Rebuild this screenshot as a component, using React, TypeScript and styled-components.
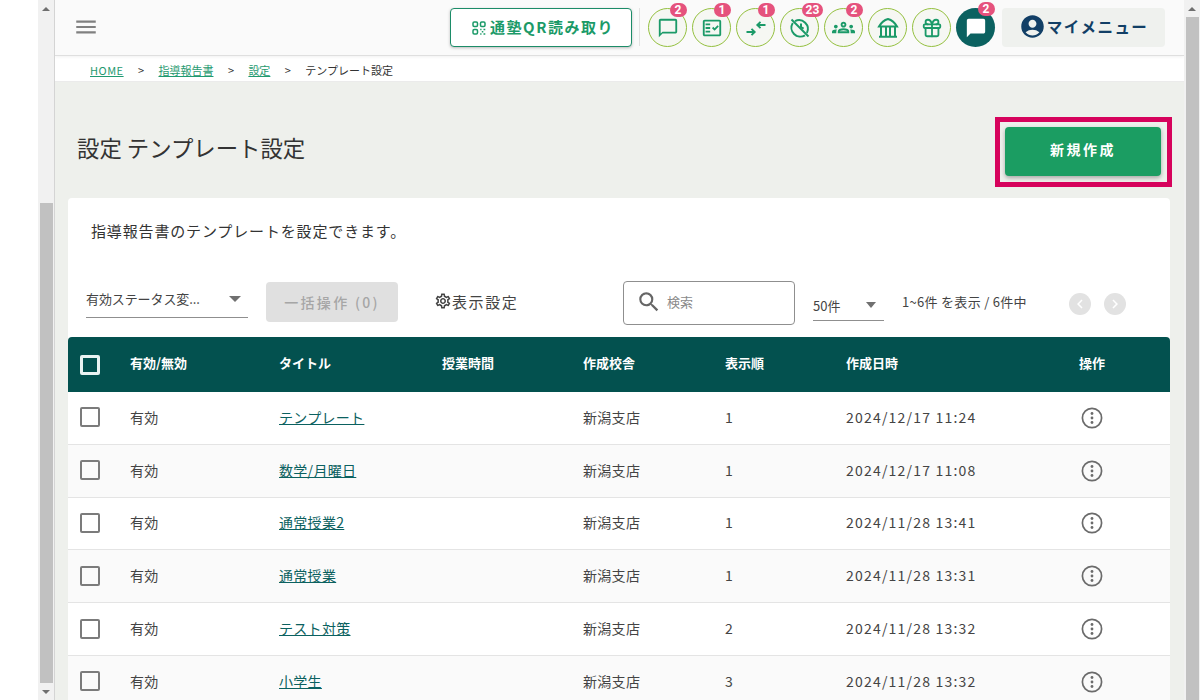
import React from "react";
import styled, { createGlobalStyle } from "styled-components";
import {
  MdAccountCircle,
  MdChatBubble,
  MdChevronLeft,
  MdChevronRight,
  MdMenu,
  MdOutlineChatBubbleOutline,
  MdOutlineFactCheck,
  MdOutlineGroups,
  MdOutlineSettings,
  MdSearch,
} from "react-icons/md";
import { Gift } from "lucide-react";

const FONT = `"Noto Sans CJK JP", "Noto Sans", sans-serif`;

const Global = createGlobalStyle`
  html, body { margin: 0; padding: 0; height: 100%; overflow: hidden; background: #fff; }
  #root { height: 700px; }
  * { box-sizing: border-box; }
  body { font-family: ${FONT}; color: #333; }
`;

const Page = styled.div`
  display: flex;
  width: 1200px;
  height: 700px;
  overflow: hidden;
  padding-left: 38px;
`;

const Track = styled.div`
  flex: 0 0 16px;
  height: 700px;
  background: #f1f1f1;
  display: flex;
  flex-direction: column;
  align-items: center;
`;
const LeftTrack = styled(Track)`
  border-right: 1px solid #d4d4d4;
  flex-basis: 17px;
`;
const Spacer = styled.div<{ $h: number }>`
  flex: 0 0 ${(p) => p.$h}px;
`;
const Thumb = styled.div`
  flex: 1;
  width: 13px;
  background: #c1c1c1;
`;
const Arrow = styled.div<{ $down?: boolean }>`
  flex: 0 0 17px;
  display: flex;
  align-items: center;
  justify-content: center;
  &::before {
    content: "";
    border-left: 4px solid transparent;
    border-right: 4px solid transparent;
    ${(p) =>
      p.$down ? "border-top: 4px solid #6f6f6f;" : "border-bottom: 4px solid #6f6f6f;"}
  }
`;

const Main = styled.div`
  flex: 1;
  min-width: 0;
  display: flex;
  flex-direction: column;
  height: 700px;
  overflow: hidden;
  background: #eef0ec;
`;

const Header = styled.header`
  flex: 0 0 56px;
  display: flex;
  align-items: flex-start;
  background: #fafafa;
  border-bottom: 1px solid #dfdfdf;
  box-shadow: 0 1px 3px rgba(0, 0, 0, 0.06);
  padding: 8px 19px 0 18px;
  position: relative;
  z-index: 1;
`;
const Burger = styled.div`
  color: #808080;
  display: flex;
  margin: 6px auto 0 0;
`;
const QrButton = styled.button`
  width: 182px;
  height: 39px;
  margin-right: 7px;
  background: #fff;
  border: 1px solid #1c8c68;
  border-radius: 4px;
  box-shadow: 0 1px 3px rgba(0, 0, 0, 0.25);
  color: #1b9a68;
  font-family: ${FONT};
  font-weight: 700;
  font-size: 15px;
  letter-spacing: 1.5px;
  display: flex;
  align-items: center;
  justify-content: center;
  gap: 4px;
  padding: 0 0 3px 4px;
`;
const QrIcon = styled.svg`
  margin-top: 3px;
`;
const Divider = styled.div`
  width: 1px;
  height: 38px;
  background: #e2e2e2;
  margin-right: 8px;
`;
const IconRow = styled.div`
  display: flex;
  gap: 5px;
`;
const Round = styled.div<{ $dark?: boolean }>`
  width: 39px;
  height: 39px;
  border-radius: 50%;
  position: relative;
  display: flex;
  align-items: center;
  justify-content: center;
  color: ${(p) => (p.$dark ? "#fff" : "#1b9a68")};
  background: ${(p) => (p.$dark ? "#0b6160" : "#f6f7f3")};
  border: ${(p) => (p.$dark ? "none" : "1px solid #94c03f")};
`;
const Badge = styled.span`
  position: absolute;
  top: -6px;
  left: 50%;
  margin-left: 2px;
  min-width: 17px;
  height: 14px;
  padding: 0 4px;
  border-radius: 7px;
  background: #e5527d;
  color: #fff;
  font-size: 12px;
  line-height: 14px;
  font-weight: 700;
  text-align: center;
  font-family: "Roboto", sans-serif;
`;
const MyMenu = styled.div`
  width: 163px;
  height: 39px;
  margin-left: 7px;
  background: #eff1ee;
  border-radius: 4px;
  padding-bottom: 3px;
  display: flex;
  align-items: center;
  justify-content: center;
  gap: 1px;
  color: #123f66;
  font-weight: 700;
  font-size: 15.5px;
  letter-spacing: 1.4px;
`;

const Crumbs = styled.nav`
  flex: 0 0 26px;
  background: #fff;
  border-bottom: 1px solid #ebebeb;
  display: flex;
  align-items: center;
  padding: 3px 0 0 35px;
  font-size: 11px;
  color: #333;
`;
const Crumb = styled.a`
  color: #1f9a70;
  text-decoration: underline;
`;
const HomeCrumb = styled(Crumb)`
  letter-spacing: 0.5px;
`;
const Sep = styled.span`
  margin: 0 14.4px;
`;

const TitleRow = styled.div`
  flex: 0 0 116px;
  display: flex;
  align-items: center;
  justify-content: space-between;
  padding: 24px 12px 0 22px;
`;
const Title = styled.h1`
  margin: 0 0 10px;
  font-size: 22.4px;
  font-weight: 400;
  color: #333;
`;
const Highlight = styled.div`
  border: 5px solid #d6035c;
  padding: 5px 6px 6px 5px;
  width: 177px;
  height: 70px;
`;
const NewButton = styled.button`
  width: 100%;
  height: 100%;
  border: none;
  border-radius: 4px;
  background: #1b9d62;
  box-shadow: 0 2px 4px rgba(0, 0, 0, 0.3);
  color: #fff;
  font-family: ${FONT};
  font-weight: 700;
  font-size: 14px;
  letter-spacing: 2.5px;
  padding: 0 0 5px;
`;

const Card = styled.section`
  margin: 0 14px 0 13px;
  background: #fff;
  border-radius: 4px 4px 0 0;
  flex: 1;
`;
const Lead = styled.p`
  margin: 0;
  padding: 22px 0 0 23px;
  height: 83px;
  font-size: 15px;
  letter-spacing: 0.85px;
  color: #333;
`;
const Toolbar = styled.div`
  height: 56px;
  display: flex;
  align-items: flex-start;
`;
const StatusSelect = styled.div`
  width: 162px;
  height: 37px;
  margin: 0 18px 0 18px;
  border-bottom: 1px solid #8f8f8f;
  display: flex;
  align-items: center;
  justify-content: space-between;
  font-size: 13px;
  letter-spacing: -0.1px;
  padding: 0 7px 1px 0;
  color: #444;
`;
const Caret = styled.span`
  width: 0;
  height: 0;
  border-left: 6px solid transparent;
  border-right: 6px solid transparent;
  border-top: 6px solid #707070;
`;
const BulkButton = styled.button`
  width: 132px;
  height: 40px;
  margin: 1px 37px 0 0;
  border: none;
  border-radius: 4px;
  background: #e0e0e0;
  color: #a6a6a6;
  font-family: ${FONT};
  font-size: 14px;
  font-weight: 500;
  letter-spacing: 2.3px;
  padding: 0;
`;
const DisplaySetting = styled.div`
  display: flex;
  align-items: center;
  height: 40px;
  margin-right: 103px;
  font-size: 15px;
  letter-spacing: 1.6px;
  color: #444;
  width: 85px;
  flex: none;
  gap: 0;
  white-space: nowrap;
`;
const GearIcon = styled(MdOutlineSettings)`
  margin-left: -1px;
`;
const Search = styled.div`
  width: 172px;
  height: 44px;
  margin: 0 18px 0 0;
  border: 1px solid #8f8f8f;
  border-radius: 4px;
  display: flex;
  align-items: center;
  padding: 0 0 2px 12px;
  gap: 5px;
  color: #666;
  font-size: 13px;
`;
const SearchHint = styled.span`
  color: #8a8a8a;
  margin-bottom: 1px;
`;
const CountSelect = styled.div`
  width: 71px;
  height: 40px;
  border-bottom: 1px solid #8f8f8f;
  margin: 0 18px 0 0;
  display: flex;
  align-items: center;
  justify-content: space-between;
  padding: 9px 8px 0 0;
  font-size: 13px;
  color: #444;
  ${Caret} {
    border-left-width: 5.5px;
    border-right-width: 5.5px;
  }
`;
const Range = styled.div`
  width: 167px;
  font-size: 13px;
  letter-spacing: 0.3px;
  height: 40px;
  display: flex;
  align-items: center;
  color: #444;
`;
const Pager = styled.div`
  display: flex;
  gap: 13px;
  height: 46px;
  align-items: center;
`;
const PageDot = styled.span`
  width: 22px;
  height: 22px;
  border-radius: 50%;
  background: #e2e2e2;
  color: #fff;
  display: flex;
  align-items: center;
  justify-content: center;
`;

const COLUMNS = "62px 149px 163px 141px 142px 121px 233px 91px";

const HeadRow = styled.div`
  display: grid;
  grid-template-columns: ${COLUMNS};
  height: 55px;
  align-items: center;
  background: #03514f;
  border-radius: 4px 4px 0 0;
  color: #fff;
  font-size: 13px;
  font-weight: 700;
  & > span {
    padding-bottom: 4px;
  }
`;
const Row = styled.div<{ $alt?: boolean }>`
  display: grid;
  grid-template-columns: ${COLUMNS};
  height: 52.8px;
  align-items: center;
  background: ${(p) => (p.$alt ? "#fafafa" : "#fff")};
  border-bottom: 1px solid #e4e4e4;
  font-size: 14px;
  letter-spacing: 0.3px;
  color: #444;
  & > span {
    padding-bottom: 2px;
  }
`;
const CheckCell = styled.div`
  padding: 0 0 1px 12px;
  display: flex;
`;
const HeadCheckCell = styled(CheckCell)`
  padding-bottom: 0;
`;
const Box = styled.span<{ $head?: boolean }>`
  width: 20px;
  height: 20px;
  border-radius: 2px;
  border: ${(p) => (p.$head ? "3px solid #e9f3f2" : "2px solid #7b7b7b")};
`;
const TitleLink = styled.a`
  color: #0b6160;
  text-decoration: underline;
`;
const DateCell = styled.span`
  letter-spacing: 1.2px;
`;
const OrderCell = styled.span``;
const MoreIcon = styled.svg`
  display: block;
  margin-left: 1px;
`;

const More = () => (
  <MoreIcon width="24" height="24" viewBox="0 0 24 24" fill="none">
    <circle cx="12" cy="12" r="9.6" stroke="#6b6b6b" strokeWidth="1.7" />
    <circle cx="12" cy="7.5" r="1.4" fill="#6b6b6b" />
    <circle cx="12" cy="12" r="1.4" fill="#6b6b6b" />
    <circle cx="12" cy="16.5" r="1.4" fill="#6b6b6b" />
  </MoreIcon>
);

const Qr = () => (
  <QrIcon width="14" height="14" viewBox="0 0 14 14" fill="none" stroke="currentColor" strokeWidth="1.5">
    <rect x="1" y="1" width="4.5" height="4.5" rx="1.2" />
    <rect x="8.500" y="1" width="4.5" height="4.5" rx="1.2" />
    <rect x="1" y="8.500" width="4.5" height="4.5" rx="1.2" />
    <path d="M8.200 8.500h1.300M11.500 8.500h1.800M9.800 10.800h1.500M8.200 13h1.300M11.500 13h1.800" />
  </QrIcon>
);

const ConvergeIcon = () => (
  <svg width="22" height="22" viewBox="0 0 22 22" fill="none" stroke="currentColor" strokeWidth="1.9">
    <path d="M1.500 15h8M6.500 11.800 9.700 15l-3.200 3.200" />
    <path d="M20.500 8h-8M15.500 4.800 12.300 8l3.200 3.200" />
  </svg>
);
const NoClockIcon = () => (
  <svg width="24" height="24" viewBox="0 0 24 24" fill="none" stroke="currentColor" strokeWidth="2">
    <path d="M7 5.100A8.900 8.900 0 0 1 18.900 17M17 19.300A8.900 8.900 0 0 1 4.800 7" />
    <path d="M3.500 3.500 20.500 20.500" />
    <path d="M13 7.500V11l2.600 1.600" />
  </svg>
);
const BankIcon = () => (
  <svg width="24" height="24" viewBox="0 0 24 24" fill="none" stroke="currentColor" strokeWidth="2">
    <path d="M3 10.500C5 7 8.200 4 12 3c3.800 1 7 4 9 7.500Z" />
    <path d="M5 10.500V20.500M19 10.500V20.500M10 10.500V20.500M14 10.500V20.500M3 20.800h18" />
  </svg>
);

const rows = [
  ["テンプレート", "1", "2024/12/17 11:24"],
  ["数学/月曜日", "1", "2024/12/17 11:08"],
  ["通常授業2", "1", "2024/11/28 13:41"],
  ["通常授業", "1", "2024/11/28 13:31"],
  ["テスト対策", "2", "2024/11/28 13:32"],
  ["小学生", "3", "2024/11/28 13:32"],
];

export default function App() {
  return (
    <>
      <Global />
      <Page>
        <LeftTrack>
          <Arrow />
          <Spacer $h={186} />
          <Thumb />
          <Arrow $down />
        </LeftTrack>
        <Main>
          <Header>
            <Burger>
              <MdMenu size={26} />
            </Burger>
            <QrButton>
              <Qr />
              通塾QR読み取り
            </QrButton>
            <Divider />
            <IconRow>
              <Round>
                <MdOutlineChatBubbleOutline size={22} />
                <Badge>2</Badge>
              </Round>
              <Round>
                <MdOutlineFactCheck size={22} />
                <Badge>1</Badge>
              </Round>
              <Round>
                <ConvergeIcon />
                <Badge>1</Badge>
              </Round>
              <Round>
                <NoClockIcon />
                <Badge>23</Badge>
              </Round>
              <Round>
                <MdOutlineGroups size={23} />
                <Badge>2</Badge>
              </Round>
              <Round>
                <BankIcon />
              </Round>
              <Round>
                <Gift size={22} strokeWidth={2} />
              </Round>
              <Round $dark>
                <MdChatBubble size={22} />
                <Badge>2</Badge>
              </Round>
            </IconRow>
            <MyMenu>
              <MdAccountCircle size={27} />
              マイメニュー
            </MyMenu>
          </Header>
          <Crumbs>
            <HomeCrumb>HOME</HomeCrumb>
            <Sep>&gt;</Sep>
            <Crumb>指導報告書</Crumb>
            <Sep>&gt;</Sep>
            <Crumb>設定</Crumb>
            <Sep>&gt;</Sep>
            <span>テンプレート設定</span>
          </Crumbs>
          <TitleRow>
            <Title>設定 テンプレート設定</Title>
            <Highlight>
              <NewButton>新規作成</NewButton>
            </Highlight>
          </TitleRow>
          <Card>
            <Lead>指導報告書のテンプレートを設定できます。</Lead>
            <Toolbar>
              <StatusSelect>
                <span>有効ステータス変...</span>
                <Caret />
              </StatusSelect>
              <BulkButton>一括操作 (0)</BulkButton>
              <DisplaySetting>
                <GearIcon size={18} />
                表示設定
              </DisplaySetting>
              <Search>
                <MdSearch size={26} />
                <SearchHint>検索</SearchHint>
              </Search>
              <CountSelect>
                <span>50件</span>
                <Caret />
              </CountSelect>
              <Range>1~6件 を表示 / 6件中</Range>
              <Pager>
                <PageDot>
                  <MdChevronLeft size={18} />
                </PageDot>
                <PageDot>
                  <MdChevronRight size={18} />
                </PageDot>
              </Pager>
            </Toolbar>
            <HeadRow>
              <HeadCheckCell>
                <Box $head />
              </HeadCheckCell>
              <span>有効/無効</span>
              <span>タイトル</span>
              <span>授業時間</span>
              <span>作成校舎</span>
              <span>表示順</span>
              <span>作成日時</span>
              <span>操作</span>
            </HeadRow>
            {rows.map(([title, order, date], i) => (
              <Row key={title} $alt={i % 2 === 1}>
                <CheckCell>
                  <Box />
                </CheckCell>
                <span>有効</span>
                <span>
                  <TitleLink>{title}</TitleLink>
                </span>
                <span />
                <span>新潟支店</span>
                <OrderCell>{order}</OrderCell>
                <DateCell>{date}</DateCell>
                <More />
              </Row>
            ))}
          </Card>
        </Main>
        <Track>
          <Arrow />
          <Thumb />
        </Track>
      </Page>
    </>
  );
}
